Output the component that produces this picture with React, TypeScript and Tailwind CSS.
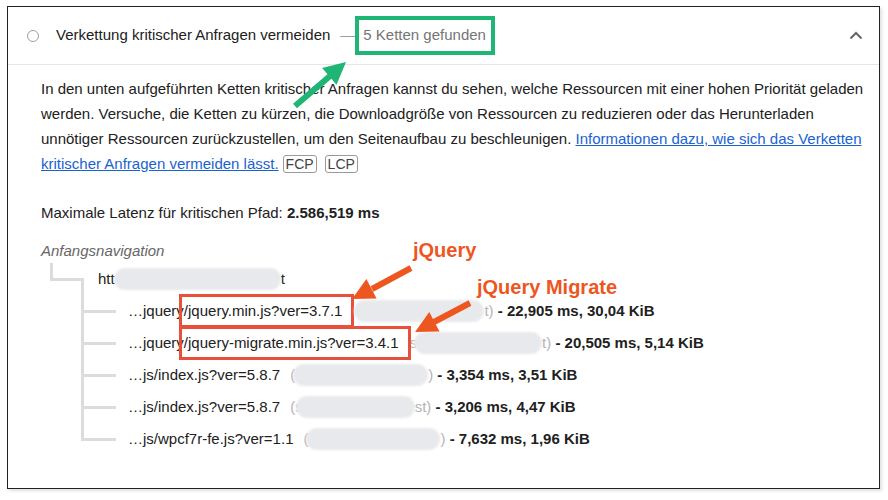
import React from 'react'

const LINE = 'bg-[#dcdcdc]'

type Chain = {
    pre: string
    boxed?: string
    grayBefore: string
    grayBeforeMl: string
    pillMl: string
    pillW: string
    grayAfter: string
    metric: string
}

const chains: Chain[] = [
    { pre: '…jquery', boxed: '/jquery.min.js?ver=3.7.1', grayBefore: '', grayBeforeMl: 'ml-0', pillMl: 'ml-[12px]', pillW: 'w-[130px]', grayAfter: 't)', metric: ' - 22,905 ms, 30,04 KiB' },
    { pre: '…jquery', boxed: '/jquery-migrate.min.js?ver=3.4.1', grayBefore: 's', grayBeforeMl: 'ml-[11px]', pillMl: 'ml-[-3px]', pillW: 'w-[128px]', grayAfter: 't)', metric: ' - 20,505 ms, 5,14 KiB' },
    { pre: '…js/index.js?ver=5.8.7', grayBefore: '(', grayBeforeMl: 'ml-[10px]', pillMl: 'ml-[-2px]', pillW: 'w-[135px]', grayAfter: ')', metric: ' - 3,354 ms, 3,51 KiB' },
    { pre: '…js/index.js?ver=5.8.7', grayBefore: '(s', grayBeforeMl: 'ml-[10px]', pillMl: 'ml-[-7px]', pillW: 'w-[119px]', grayAfter: 'st)', metric: ' - 3,206 ms, 4,47 KiB' },
    { pre: '…js/wpcf7r-fe.js?ver=1.1', grayBefore: '(', grayBeforeMl: 'ml-[10px]', pillMl: 'ml-[-2px]', pillW: 'w-[134px]', grayAfter: ')', metric: ' - 7,632 ms, 1,96 KiB' },
]

function Pill({ w, ml }: { w: string; ml: string }) {
    return <span className={`inline-block align-middle h-[22px] rounded-full bg-[#e8e9ec] blur-[1px] ${w} ${ml}`} />
}

function ChainRow({ c, last }: { c: Chain; last: boolean }) {
    return (
        <div className="flex h-[32px]">
            <div className="w-[40px] shrink-0" />
            <div className="w-[35px] shrink-0 flex flex-col">
                <div className="flex-1 border-l-[3px] border-[#dcdcdc]" />
                <div className={`h-[3px] ${LINE}`} />
                <div className={`flex-1 ${last ? '' : 'border-l-[3px] border-[#dcdcdc]'}`} />
            </div>
            <div className="ml-[12px] flex items-center whitespace-nowrap">
                <span>{c.pre}</span>
                {c.boxed && (
                    <span className="relative">
                        {c.boxed}
                        <span className="absolute -left-[5px] -right-[12px] -top-[6px] -bottom-[6px] border-[3px] border-[#e9503b]" />
                    </span>
                )}
                {c.grayBefore && <span className={`text-[#b4b4b4] ${c.grayBeforeMl}`}>{c.grayBefore}</span>}
                <Pill w={c.pillW} ml={c.pillMl} />
                <span className="text-[#b4b4b4]">{c.grayAfter}</span>
                <b className="whitespace-pre font-bold">{c.metric}</b>
            </div>
        </div>
    )
}

export default function App() {
    return (
        <div className="relative w-[888px] h-[500px] bg-white overflow-hidden pt-[6px] pl-[7px] font-['Liberation_Sans',Arial,sans-serif] text-[15px] text-[#212121]">
            <div className="w-[873px] h-[483px] border border-[#222] shadow-[2px_2px_3px_rgba(0,0,0,0.12)]">
                {/* Header */}
                <div className="h-[58px] flex items-center border-b border-[#e6e6e6]">
                    <span className="ml-[19px] w-[12px] h-[12px] rounded-full border-[1.5px] border-[#a0a0a0]" />
                    <span className="ml-[17px]">Verkettung kritischer Anfragen vermeiden</span>
                    <span className="ml-[10px] text-[#9e9e9e]">—</span>
                    <span className="relative ml-[8px] text-[#757575]">
                        5 Ketten gefunden
                        <span className="absolute -left-[8px] -right-[9px] -top-[8px] -bottom-[8px] border-[4px] border-[#1fb574]" />
                    </span>
                    <svg className="ml-auto mr-[16px]" width="14" height="9" viewBox="0 0 14 9">
                        <polyline points="1.5,7.5 7,2 12.5,7.5" fill="none" stroke="#666" strokeWidth="2" />
                    </svg>
                </div>

                {/* Body */}
                <div className="pl-[33px] pt-[11px]">
                    <p className="leading-[25px] whitespace-nowrap">
                        In den unten aufgeführten Ketten kritischer Anfragen kannst du sehen, welche Ressourcen mit einer hohen Priorität geladen
                        <br />
                        werden. Versuche, die Ketten zu kürzen, die Downloadgröße von Ressourcen zu reduzieren oder das Herunterladen
                        <br />
                        unnötiger Ressourcen zurückzustellen, um den Seitenaufbau zu beschleunigen.{' '}
                        <a className="text-[#1a62d1] underline">Informationen dazu, wie sich das Verketten</a>
                        <br />
                        <a className="text-[#1a62d1] underline">kritischer Anfragen vermeiden lässt.</a>
                        <span className="ml-[4px] inline-block leading-[16px] px-[2px] border border-[#9a9a9a] rounded-[3px] text-[14px] text-[#444]">FCP</span>
                        <span className="ml-[8px] inline-block leading-[16px] px-[2px] border border-[#9a9a9a] rounded-[3px] text-[14px] text-[#444]">LCP</span>
                    </p>

                    <p className="mt-[24px] leading-[25px]">
                        Maximale Latenz für kritischen Pfad: <b className="font-bold">2.586,519 ms</b>
                    </p>

                    <p className="mt-[13px] leading-[25px] italic text-[#666]">Anfangsnavigation</p>

                    {/* Tree */}
                    <div>
                        <div className="flex h-[32px]">
                            <div className="w-[9px] shrink-0" />
                            <div className="w-[34px] shrink-0 flex flex-col">
                                <div className="h-[15px] border-l-[3px] border-[#dcdcdc]" />
                                <div className={`h-[3px] ${LINE}`} />
                                <div className="flex-1 ml-[31px] border-l-[3px] border-[#dcdcdc]" />
                            </div>
                            <div className="ml-[14px] flex items-center whitespace-nowrap">
                                <span>htt</span>
                                <Pill w="w-[167px]" ml="ml-[-1px]" />
                                <span>t</span>
                            </div>
                        </div>
                        {chains.map((c, i) => (
                            <ChainRow key={i} c={c} last={i === chains.length - 1} />
                        ))}
                    </div>
                </div>
            </div>

            {/* Annotations */}
            <svg className="absolute inset-0 pointer-events-none" width="888" height="500">
                <line x1="295" y1="106" x2="330" y2="76" stroke="#1fb574" strokeWidth="6" />
                <polygon points="346,62 336.5,84.7 322.1,68.1" fill="#1fb574" />
                <line x1="411" y1="268" x2="372" y2="289" stroke="#ee561f" strokeWidth="6" />
                <polygon points="352,299 376.6,298.5 366.4,279.1" fill="#ee561f" />
                <line x1="470" y1="303" x2="434" y2="322" stroke="#ee561f" strokeWidth="6" />
                <polygon points="415,332 439.5,331.4 429.3,312" fill="#ee561f" />
            </svg>
            <div className="absolute left-[413px] top-[239px] text-[20px] leading-[22px] font-bold text-[#ee561f]">jQuery</div>
            <div className="absolute left-[477px] top-[276px] text-[20px] leading-[22px] font-bold text-[#ee561f]">jQuery Migrate</div>
        </div>
    )
}
